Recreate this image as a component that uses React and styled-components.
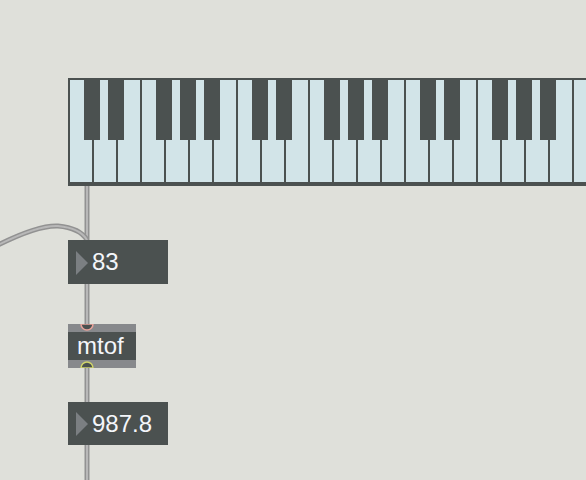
import React from 'react';
import styled, { createGlobalStyle } from 'styled-components';

const GlobalStyle = createGlobalStyle`
  html, body {
    margin: 0;
    padding: 0;
    background: #dfe0da;
  }
`;

const Patcher = styled.div`
  position: relative;
  width: 586px;
  height: 480px;
  overflow: hidden;
  background: #dfe0da;
  font-family: "Liberation Sans", Arial, sans-serif;
`;

// objects sit on the patcher canvas at their own coordinates
const Node = styled.div`
  position: absolute;
  left: ${(p) => p.$x}px;
  top: ${(p) => p.$y}px;
`;

const Cables = styled.svg`
  position: absolute;
  left: 0;
  top: 0;
`;

const Keyboard = styled.div`
  position: relative;
  display: flex;
  gap: 2px;
  width: 700px;
  height: 102px;
  background: #4b5150;
  border-top: 2px solid #4b5150;
  border-left: 2px solid #4b5150;
  border-bottom: 4px solid #4b5150;
`;

const WhiteKey = styled.div`
  flex: 0 0 22px;
  height: 100%;
  background: #d2e4e8;
`;

const BlackKey = styled.div`
  position: absolute;
  top: 0;
  width: 16px;
  height: 60px;
  background: #4b5150;
`;

const NumberBox = styled.div`
  display: flex;
  align-items: center;
  width: ${(p) => p.$w}px;
  height: ${(p) => p.$h}px;
  background: #4b5150;
  box-sizing: border-box;
  padding-left: 8px;
  color: #f4f6fa;
  font-size: 24px;
`;

const Arrow = styled.div`
  width: 0;
  height: 0;
  border-top: 12px solid transparent;
  border-bottom: 12px solid transparent;
  border-left: 12px solid #7b7f82;
  margin-right: 4px;
  margin-top: 1px;
`;

const ObjectBox = styled.div`
  position: relative;
  width: 68px;
  height: 44px;
  box-sizing: border-box;
  background: #4b5150;
  border-top: 8px solid #87898c;
  border-bottom: 8px solid #87898c;
  padding-left: 9px;
  color: #f4f6fa;
  font-size: 24px;
  line-height: 27px;
`;

const Port = styled.svg`
  position: absolute;
  left: 11px;
  top: ${(p) => p.$top}px;
`;

const blackOffsets = [14, 38, 86, 110, 134];

function Piano() {
  const whites = Array.from({ length: 28 }, (_, i) => i);
  const blacks = [];
  for (let o = 0; o < 4; o++) {
    blackOffsets.forEach((off, j) => blacks.push(o * 168 + off));
  }
  return (
    <Keyboard>
      {whites.map((i) => (
        <WhiteKey key={i} />
      ))}
      {blacks.map((x) => (
        <BlackKey key={x} style={{ left: x }} />
      ))}
    </Keyboard>
  );
}

function Cable({ d }) {
  return (
    <g fill="none">
      <path d={d} stroke="#929292" strokeWidth="5" />
      <path d={d} stroke="#b8b8b8" strokeWidth="2" />
    </g>
  );
}

export default function App() {
  return (
    <Patcher>
      <GlobalStyle />
      <Cables width="586" height="480">
        <Cable d="M87 186 L87 480" />
        <Cable d="M-2 245 Q38 225 58 226 Q80 228 87 240" />
      </Cables>

      <Node $x={68} $y={78}>
        <Piano />
      </Node>

      <Node $x={68} $y={240}>
        <NumberBox $w={100} $h={44}>
          <Arrow />
          83
        </NumberBox>
      </Node>

      <Node $x={68} $y={324}>
        <ObjectBox>
          mtof
          <Port $top={-8} width="16" height="9">
            <path d="M2 0 A6 6 0 0 0 14 0 Z" fill="#4b5150" stroke="#e8a29a" strokeWidth="1.5" />
          </Port>
          <Port $top={28} width="16" height="8">
            <path d="M2 8 A6 6 0 0 1 14 8 Z" fill="#4b5150" stroke="#d0d46a" strokeWidth="1.5" />
          </Port>
        </ObjectBox>
      </Node>

      <Node $x={68} $y={402}>
        <NumberBox $w={100} $h={43}>
          <Arrow />
          987.8
        </NumberBox>
      </Node>
    </Patcher>
  );
}
